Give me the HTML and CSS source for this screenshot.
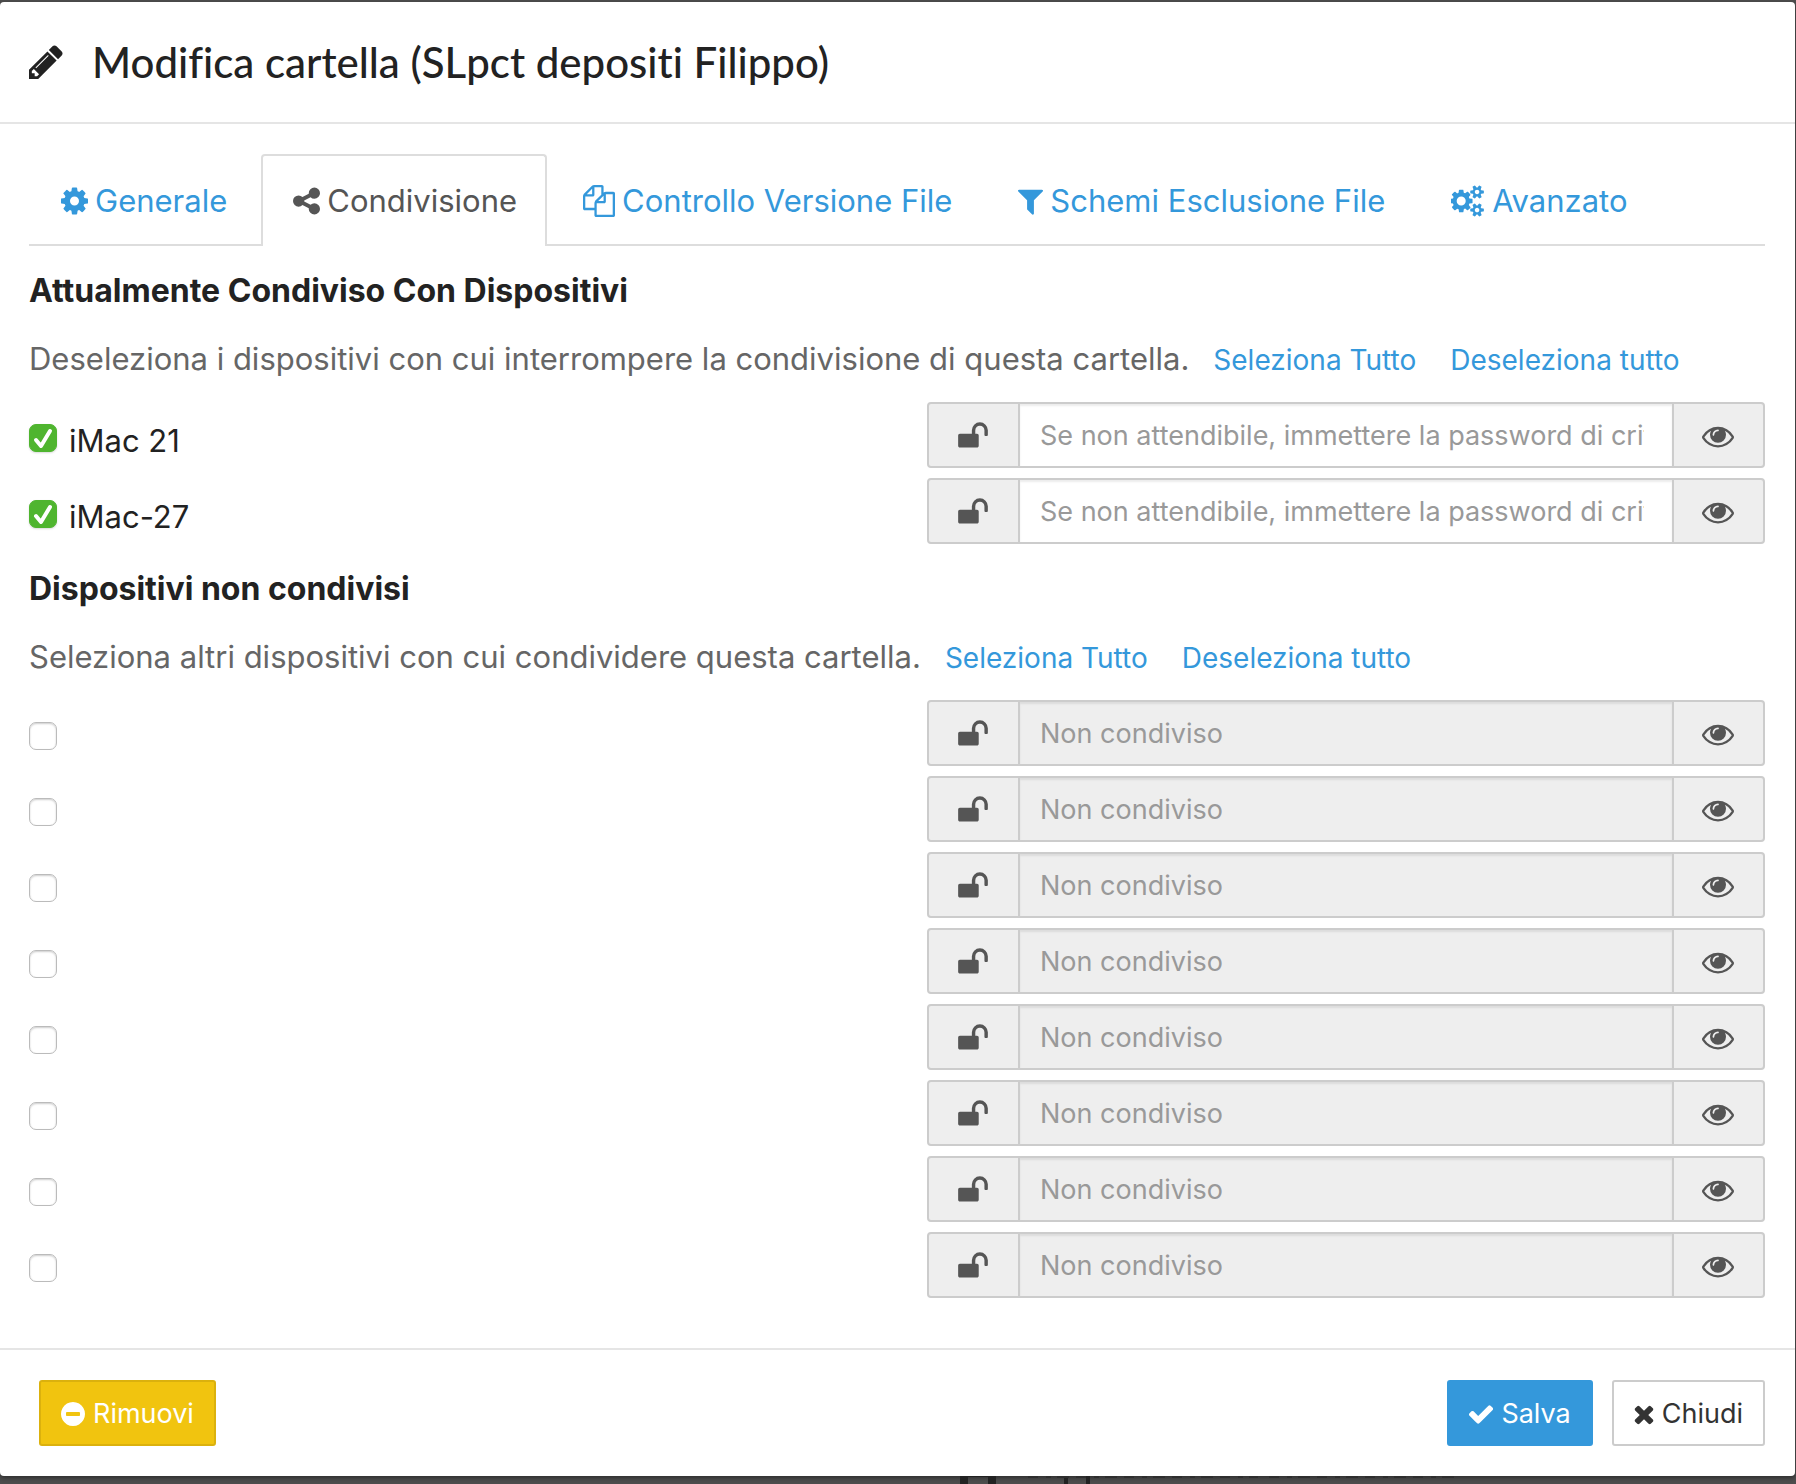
FILE: index.html
```html
<!DOCTYPE html>
<html lang="it">
<head>
<meta charset="utf-8">
<title>Modifica cartella</title>
<link rel="stylesheet" href="styles.css">
</head>
<body>
<svg class="sprite" aria-hidden="true">
  <symbol id="pencil" viewBox="128 0 1536 1792"><path d="M491 1536l91-91-235-235-91 91v107h128v128h107zm523-928q0-22-22-22-10 0-17 7l-542 542q-7 7-7 17 0 22 22 22 10 0 17-7l542-542q7-7 7-17zm-54-192l416 416-832 832h-416v-416zm683 96q0 53-37 90l-166 166-416-416 166-165q36-38 90-38 53 0 91 38l235 234q37 39 37 91z"/></symbol>
  <symbol id="cog" viewBox="128 0 1536 1792"><path d="M1152 896q0-106-75-181t-181-75-181 75-75 181 75 181 181 75 181-75 75-181zm512-109v222q0 12-8 23t-20 13l-185 28q-19 54-39 91 35 50 107 138 10 12 10 25t-9 23q-27 37-99 108t-94 71q-12 0-26-9l-138-108q-44 23-91 38-16 136-29 186-7 28-36 28h-222q-14 0-24.500-8.500t-11.500-21.500l-28-184q-49-16-90-37l-141 107q-10 9-25 9-14 0-25-11-126-114-165-168-7-10-7-23 0-12 8-23 15-21 51-66.500t54-70.500q-27-50-41-99l-183-27q-13-2-21-12.500t-8-23.500v-222q0-12 8-23t19-13l186-28q14-46 39-92-40-57-107-138-10-12-10-24 0-10 9-23 26-36 98.500-107.500t94.500-71.500q13 0 26 10l138 107q44-23 91-38 16-136 29-186 7-28 36-28h222q14 0 24.500 8.500t11.500 21.500l28 184q49 16 90 37l142-107q9-9 24-9 13 0 25 10 129 119 165 170 7 8 7 22 0 12-8 23-15 21-51 66.500t-54 70.500q26 50 41 98l183 28q13 2 21 12.500t8 23.500z"/></symbol>
  <symbol id="share" viewBox="128 0 1536 1792"><path d="M1344 1024q133 0 226.500 93.500t93.500 226.500-93.500 226.500-226.500 93.500-226.500-93.500-93.500-226.500q0-12 2-34l-360-180q-92 86-218 86-133 0-226.500-93.500t-93.500-226.500 93.500-226.500 226.500-93.500q126 0 218 86l360-180q-2-22-2-34 0-133 93.500-226.500t226.500-93.500 226.500 93.500 93.500 226.500-93.500 226.500-226.500 93.500q-126 0-218-86l-360 180q2 22 2 34t-2 34l360 180q92-86 218-86z"/></symbol>
  <symbol id="files" viewBox="0 0 1792 1792"><path d="M1696 384q40 0 68 28t28 68v1216q0 40-28 68t-68 28h-960q-40 0-68-28t-28-68v-288h-544q-40 0-68-28t-28-68v-672q0-40 20-88t48-76l408-408q28-28 76-48t88-20h416q40 0 68 28t28 68v328q68-40 128-40h416zm-544 213l-299 299h299v-299zm-640-384l-299 299h299v-299zm196 647l316-316v-416h-384v416q0 40-28 68t-68 28h-416v640h512v-256q0-40 20-88t48-76zm956 804v-1152h-384v416q0 40-28 68t-68 28h-416v640h896z"/></symbol>
  <symbol id="filter" viewBox="192 0 1408 1792"><path d="M1595 295q17 41-14 70l-493 493v742q0 42-39 59-13 5-25 5-27 0-45-19l-256-256q-19-19-19-45v-486l-493-493q-31-29-14-70 17-39 59-39h1280q42 0 59 39z"/></symbol>
  <symbol id="cogs" viewBox="0 0 1920 1792"><path d="M832 896q0-106-75-181t-181-75-181 75-75 181 75 181 181 75 181-75 75-181zm768 512q0-52-38-90t-90-38-90 38-38 90q0 53 37.500 90.500t90.500 37.500 90.500-37.500 37.500-90.500zm0-1024q0-52-38-90t-90-38-90 38-38 90q0 53 37.500 90.500t90.500 37.500 90.500-37.500 37.500-90.500zm-384 421v185q0 10-7 19.500t-16 10.500l-155 24q-11 35-32 76 34 48 90 115 7 10 7 20 0 12-7 19-23 30-82.500 89.500t-78.500 59.500q-11 0-21-7l-115-90q-37 19-77 31-11 108-23 155-7 24-30 24h-186q-11 0-20-7.500t-10-17.500l-23-153q-34-10-75-31l-118 89q-7 7-20 7-11 0-21-8-144-133-144-160 0-9 7-19 10-14 41-53t47-61q-23-44-35-82l-152-24q-10-1-17-9.500t-7-19.500v-185q0-10 7-19.500t16-10.500l155-24q11-35 32-76-34-48-90-115-7-11-7-20 0-12 7-20 22-30 82-89t79-59q11 0 21 7l115 90q34-18 77-32 11-108 23-154 7-24 30-24h186q11 0 20 7.500t10 17.500l23 153q34 10 75 31l118-89q8-7 20-7 11 0 21 8 144 133 144 160 0 9-7 19-12 16-42 54t-45 60q23 48 34 82l152 23q10 2 17 10.500t7 19.500zm640 533v140q0 16-149 31-12 27-30 52 51 113 51 138 0 4-4 7-122 71-124 71-8 0-46-47t-52-68q-20 2-30 2t-30-2q-14 21-52 68t-46 47q-2 0-124-71-4-3-4-7 0-25 51-138-18-25-30-52-149-15-149-31v-140q0-16 149-31 13-29 30-52-51-113-51-138 0-4 4-7 4-2 35-20t59-34 30-16q8 0 46 46.500t52 67.500q20-2 30-2t30 2q51-71 92-112l6-2q4 0 124 70 4 3 4 7 0 25-51 138 17 23 30 52 149 15 149 31zm0-1024v140q0 16-149 31-12 27-30 52 51 113 51 138 0 4-4 7-122 71-124 71-8 0-46-47t-52-68q-20 2-30 2t-30-2q-14 21-52 68t-46 47q-2 0-124-71-4-3-4-7 0-25 51-138-18-25-30-52-149-15-149-31v-140q0-16 149-31 13-29 30-52-51-113-51-138 0-4 4-7 4-2 35-20t59-34 30-16q8 0 46 46.500t52 67.500q20-2 30-2t30 2q51-71 92-112l6-2q4 0 124 70 4 3 4 7 0 25-51 138 17 23 30 52 149 15 149 31z"/></symbol>
  <symbol id="unlock" viewBox="0 0 1792 1792"><path d="M1728 576v256q0 26-19 45t-45 19h-64q-26 0-45-19t-19-45v-256q0-106-75-181t-181-75-181 75-75 181v192h96q40 0 68 28t28 68v576q0 40-28 68t-68 28h-960q-40 0-68-28t-28-68v-576q0-40 28-68t68-28h672v-192q0-185 131.500-316.500t316.500-131.500 316.500 131.500 131.500 316.500z"/></symbol>
  <symbol id="eye" viewBox="0 0 1792 1792"><path d="M1664 960q-152-236-381-353 61 104 61 225 0 185-131.500 316.500t-316.500 131.500-316.500-131.500-131.500-316.500q0-121 61-225-229 117-381 353 133 205 333.500 326.500t434.500 121.500 434.500-121.500 333.500-326.500zm-720-384q0-20-14-34t-34-14q-125 0-214.500 89.500t-89.500 214.500q0 20 14 34t34 14 34-14 14-34q0-86 61-147t147-61q20 0 34-14t14-34zm848 384q0 34-20 69-140 230-376.500 368.500t-499.500 138.500-499.500-139-376.500-368q-20-35-20-69t20-69q140-229 376.500-368t499.500-139 499.500 139 376.500 368q20 35 20 69z"/></symbol>
  <symbol id="minus" viewBox="128 0 1536 1792"><path d="M1344 960v-128q0-26-19-45t-45-19h-768q-26 0-45 19t-19 45v128q0 26 19 45t45 19h768q26 0 45-19t19-45zm320-64q0 209-103 385.500t-279.500 279.500-385.500 103-385.500-103-279.500-279.500-103-385.500 103-385.500 279.500-279.500 385.500-103 385.500 103 279.500 279.500 103 385.500z"/></symbol>
  <symbol id="check" viewBox="128 0 1536 1792"><path d="M1671 566q0 40-28 68l-724 724-136 136q-28 28-68 28t-68-28l-136-136-362-362q-28-28-28-68t28-68l136-136q28-28 68-28t68 28l294 295 656-657q28-28 68-28t68 28l136 136q28 28 28 68z"/></symbol>
  <symbol id="times" viewBox="256 0 1280 1792"><path d="M1490 1322q0 40-28 68l-136 136q-28 28-68 28t-68-28l-294-294-294 294q-28 28-68 28t-68-28l-136-136q-28-28-28-68t28-68l294-294-294-294q-28-28-28-68t28-68l136-136q28-28 68-28t68 28l294 294 294-294q28-28 68-28t68 28l136 136q28 28 28 68t-28 68l-294 294 294 294q28 28 28 68z"/></symbol>
</svg>

<form class="modal" role="dialog" aria-labelledby="modal-title">
  <header class="modal-header">
    <svg class="icon-title"><use href="#pencil"/></svg>
    <h1 id="modal-title">Modifica cartella (SLpct depositi Filippo)</h1>
  </header>

  <div class="modal-body">
    <nav class="tabs">
      <a class="tab" href="#generale"><svg class="icon w27"><use href="#cog"/></svg>Generale</a>
      <a class="tab active" href="#condivisione"><svg class="icon w27"><use href="#share"/></svg>Condivisione</a>
      <a class="tab" href="#versioni"><svg class="icon"><use href="#files"/></svg>Controllo Versione File</a>
      <a class="tab" href="#schemi"><svg class="icon w25"><use href="#filter"/></svg>Schemi Esclusione File</a>
      <a class="tab" href="#avanzato"><svg class="icon w34"><use href="#cogs"/></svg>Avanzato</a>
    </nav>

    <section class="group">
      <h2>Attualmente Condiviso Con Dispositivi</h2>
      <p class="help">Deseleziona i dispositivi con cui interrompere la condivisione di questa cartella. <span class="links"><a href="#tutti">Seleziona Tutto</a><a href="#nessuno">Deseleziona tutto</a></span></p>
      <div class="devices">
        <div class="device">
          <label class="pick"><input type="checkbox" checked><span>iMac 21</span></label>
          <div class="field"><span class="addon"><svg class="icon"><use href="#unlock"/></svg></span><input type="text" aria-label="Password di iMac 21" placeholder="Se non attendibile, immettere la password di crittografia"><button type="button" class="addon" aria-label="Mostra password"><svg class="icon"><use href="#eye"/></svg></button></div>
        </div>
        <div class="device">
          <label class="pick"><input type="checkbox" checked><span>iMac-27</span></label>
          <div class="field"><span class="addon"><svg class="icon"><use href="#unlock"/></svg></span><input type="text" aria-label="Password di iMac-27" placeholder="Se non attendibile, immettere la password di crittografia"><button type="button" class="addon" aria-label="Mostra password"><svg class="icon"><use href="#eye"/></svg></button></div>
        </div>
      </div>
    </section>

    <section class="group">
      <h2>Dispositivi non condivisi</h2>
      <p class="help">Seleziona altri dispositivi con cui condividere questa cartella. <span class="links"><a href="#tutti-altri">Seleziona Tutto</a><a href="#nessuno-altri">Deseleziona tutto</a></span></p>
      <div class="devices">
        <div class="device">
          <label class="pick"><input type="checkbox" aria-label="Dispositivo 1"></label>
          <div class="field"><span class="addon"><svg class="icon"><use href="#unlock"/></svg></span><input type="text" aria-label="Password 1" placeholder="Non condiviso" disabled><button type="button" class="addon" aria-label="Mostra password"><svg class="icon"><use href="#eye"/></svg></button></div>
        </div>
        <div class="device">
          <label class="pick"><input type="checkbox" aria-label="Dispositivo 2"></label>
          <div class="field"><span class="addon"><svg class="icon"><use href="#unlock"/></svg></span><input type="text" aria-label="Password 2" placeholder="Non condiviso" disabled><button type="button" class="addon" aria-label="Mostra password"><svg class="icon"><use href="#eye"/></svg></button></div>
        </div>
        <div class="device">
          <label class="pick"><input type="checkbox" aria-label="Dispositivo 3"></label>
          <div class="field"><span class="addon"><svg class="icon"><use href="#unlock"/></svg></span><input type="text" aria-label="Password 3" placeholder="Non condiviso" disabled><button type="button" class="addon" aria-label="Mostra password"><svg class="icon"><use href="#eye"/></svg></button></div>
        </div>
        <div class="device">
          <label class="pick"><input type="checkbox" aria-label="Dispositivo 4"></label>
          <div class="field"><span class="addon"><svg class="icon"><use href="#unlock"/></svg></span><input type="text" aria-label="Password 4" placeholder="Non condiviso" disabled><button type="button" class="addon" aria-label="Mostra password"><svg class="icon"><use href="#eye"/></svg></button></div>
        </div>
        <div class="device">
          <label class="pick"><input type="checkbox" aria-label="Dispositivo 5"></label>
          <div class="field"><span class="addon"><svg class="icon"><use href="#unlock"/></svg></span><input type="text" aria-label="Password 5" placeholder="Non condiviso" disabled><button type="button" class="addon" aria-label="Mostra password"><svg class="icon"><use href="#eye"/></svg></button></div>
        </div>
        <div class="device">
          <label class="pick"><input type="checkbox" aria-label="Dispositivo 6"></label>
          <div class="field"><span class="addon"><svg class="icon"><use href="#unlock"/></svg></span><input type="text" aria-label="Password 6" placeholder="Non condiviso" disabled><button type="button" class="addon" aria-label="Mostra password"><svg class="icon"><use href="#eye"/></svg></button></div>
        </div>
        <div class="device">
          <label class="pick"><input type="checkbox" aria-label="Dispositivo 7"></label>
          <div class="field"><span class="addon"><svg class="icon"><use href="#unlock"/></svg></span><input type="text" aria-label="Password 7" placeholder="Non condiviso" disabled><button type="button" class="addon" aria-label="Mostra password"><svg class="icon"><use href="#eye"/></svg></button></div>
        </div>
        <div class="device">
          <label class="pick"><input type="checkbox" aria-label="Dispositivo 8"></label>
          <div class="field"><span class="addon"><svg class="icon"><use href="#unlock"/></svg></span><input type="text" aria-label="Password 8" placeholder="Non condiviso" disabled><button type="button" class="addon" aria-label="Mostra password"><svg class="icon"><use href="#eye"/></svg></button></div>
        </div>
      </div>
    </section>
  </div>

  <footer class="modal-footer">
    <button type="button" class="btn btn-warning"><svg class="icon-btn w24"><use href="#minus"/></svg>Rimuovi</button>
    <button type="button" class="btn btn-primary"><svg class="icon-btn w24"><use href="#check"/></svg>Salva</button>
    <button type="button" class="btn btn-default"><svg class="icon-btn w20"><use href="#times"/></svg>Chiudi</button>
  </footer>
</form>

<!-- Edge of the dimmed page behind the dialog -->
<div class="behind" aria-hidden="true">
  <svg viewBox="0 0 520 8" width="520" height="8">
    <path fill="#222" d="M9 0h36v8h-8V1H17v7H9zM113 0h4v8h-4zM135 0h4v8h-4z"/>
    <path stroke="#2e2e2e" stroke-width="2" stroke-dasharray="10 8 5 6 12 7" d="M77 1h230M318 1h190"/>
  </svg>
</div>
</body>
</html>
```
FILE: styles.css
```css
* { box-sizing: border-box; }

body {
  margin: 0;
  padding: 2px 1px 0 0;
  background: #4d4d4d;
  color: #222;
  font: 31px/46px Inter, "Liberation Sans", sans-serif;
}

.sprite { position: absolute; width: 0; height: 0; }

svg { display: block; flex: none; fill: currentColor; }

a { color: #3498db; text-decoration: none; }

h1, h2, p { margin: 0; }

.modal {
  background: #fff;
  border-radius: 4px;
  box-shadow: 0 2px 4px rgba(0, 0, 0, .4);
}

.modal-header {
  display: flex;
  align-items: center;
  gap: 29px;
  padding: 30px 29px;
  border-bottom: 2px solid #e5e5e5;
}

.icon-title { width: 34px; height: 40px; }

h1 {
  font: 500 42px/60px Lato, "Open Sans", sans-serif;
  font-variant-ligatures: none;
}

.modal-body { padding: 30px 30px 50px 29px; }

.tabs {
  display: flex;
  gap: 4px;
  margin-bottom: 22px;
  box-shadow: inset 0 -2px #ddd;
}

.tab {
  display: flex;
  align-items: center;
  gap: 7px;
  padding: 22px 28px 22px 30px;
  border: 2px solid transparent;
  border-bottom: 0;
  border-radius: 4px 4px 0 0;
  white-space: nowrap;
}

.tab.active {
  border-color: #ddd;
  background: #fff;
  color: #555;
}

.icon { width: 32px; height: 32px; }
.icon.w25 { width: 25px; }
.icon.w27 { width: 27px; }
.icon.w34 { width: 34px; }

.group + .group { margin-top: 22px; }

h2 {
  margin-bottom: 22px;
  font-size: 32px;
  font-weight: 700;
  line-height: 46px;
}

.help {
  display: flex;
  gap: 24px;
  margin-bottom: 20px;
  color: #666;
  white-space: nowrap;
}

.links {
  display: flex;
  gap: 34px;
  font-size: 28px;
  line-height: 48px;
  height: 46px;
}

.devices { display: grid; gap: 10px; }

.device {
  display: grid;
  grid-template-columns: 1fr 1fr;
  gap: 60px;
}

.pick {
  display: flex;
  align-items: center;
  gap: 12px;
  padding-top: 6px;
}

.pick span { padding-top: 6px; }

.pick input {
  appearance: none;
  width: 28px;
  height: 28px;
  margin: 0;
  border: 1px solid #bbb;
  border-radius: 7px;
  background: #fff;
  box-shadow: inset 0 1px 2px rgba(0, 0, 0, .2);
}

.pick input:checked {
  border-color: #4fb52f;
  background: #4fb52f url("data:image/svg+xml,%3Csvg xmlns='http://www.w3.org/2000/svg' viewBox='0 0 26 26'%3E%3Cpath d='M6 15l5 6L20 6' fill='none' stroke='%23fff' stroke-width='4' stroke-linecap='round' stroke-linejoin='round'/%3E%3C/svg%3E");
  box-shadow: 0 1px 2px rgba(0, 0, 0, .15);
}

.field {
  display: flex;
  height: 66px;
  border: 2px solid #ccc;
  border-radius: 4px;
  background: #eee;
}

.field input {
  flex: 1;
  min-width: 0;
  padding: 2px 28px 0 20px;
  border: solid #ccc;
  border-width: 0 2px;
  background: #fff;
  box-shadow: inset 0 2px 2px rgba(0, 0, 0, .075);
  color: #555;
  font: 27px/40px Inter, "Liberation Sans", sans-serif;
}

.field input:disabled { background: #eee; }
.field input::placeholder { color: #999; }

.addon {
  display: flex;
  align-items: center;
  justify-content: center;
  width: 89px;
  padding: 1px 2px 0 0;
  border: 0;
  background: none;
  color: #555;
}

.modal-footer {
  display: flex;
  gap: 19px;
  padding: 30px 30px 30px 39px;
  border-top: 2px solid #e5e5e5;
}

.btn {
  display: flex;
  align-items: center;
  gap: 8px;
  height: 66px;
  padding: 2px 20px 0;
  border: 2px solid #ccc;
  border-radius: 3px;
  background: #fff;
  color: #333;
  font: 27px/40px Inter, "Liberation Sans", sans-serif;
}

.btn-warning {
  margin-right: auto;
  border-color: #dbb10d;
  background: #f1c40f;
  color: #fff;
}

.btn-primary {
  border-color: #3498db;
  background: #3498db;
  color: #fff;
}

.icon-btn { height: 28px; }
.icon-btn.w20 { width: 20px; }
.icon-btn.w24 { width: 24px; }

.behind { padding-left: 53%; }
```
